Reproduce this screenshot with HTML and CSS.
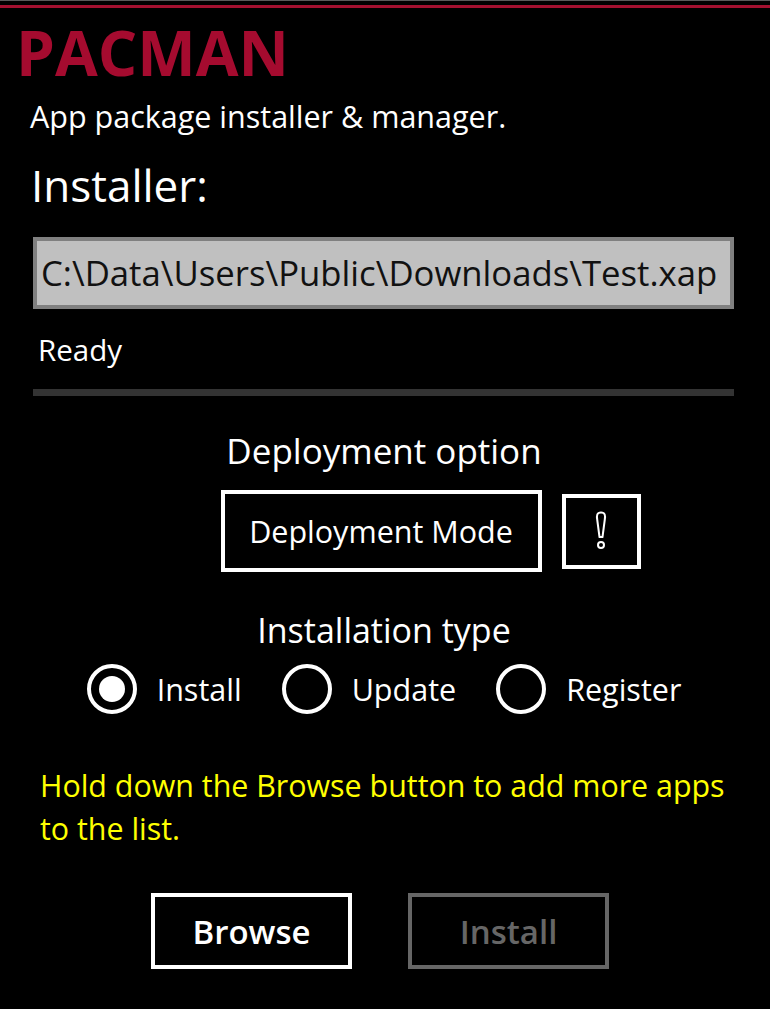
FILE: index.html
```html
<!DOCTYPE html>
<html>
<head>
<meta charset="utf-8">
<link rel="stylesheet" href="styles.css">
</head>
<body>
<div class="app">
  <div class="rule-gray"></div>
  <div class="rule-red"></div>
  <h1 class="title">PACMAN</h1>
  <p class="subtitle">App package installer &amp; manager.</p>
  <h2 class="section">Installer:</h2>
  <div class="pathbox">C:\Data\Users\Public\Downloads\Test.xap</div>
  <div class="status">Ready</div>
  <div class="progress"></div>

  <div class="group-label deploy-label">Deployment option</div>
  <div class="deploy-row">
    <div class="btn deploy-btn">Deployment Mode</div>
    <div class="btn info-btn">
      <svg width="16" height="40" viewBox="0 0 16 40">
        <path d="M8 1.5 C3.8 1.5 3.6 4.5 4.2 8.5 L6.5 26 H9.5 L11.8 8.5 C12.4 4.5 12.2 1.5 8 1.5 Z" fill="none" stroke="#fff" stroke-width="2" stroke-linejoin="round"/>
        <circle cx="8" cy="34" r="3" fill="none" stroke="#fff" stroke-width="2"/>
      </svg>
    </div>
  </div>

  <div class="group-label type-label">Installation type</div>
  <div class="radios">
    <label class="radio"><span class="circle"><span class="dot"></span></span>Install</label>
    <label class="radio"><span class="circle"></span>Update</label>
    <label class="radio"><span class="circle"></span>Register</label>
  </div>

  <p class="hint">Hold down the Browse button to add more apps to the list.</p>

  <div class="actions">
    <div class="btn action">Browse</div>
    <div class="btn action disabled">Install</div>
  </div>
</div>
</body>
</html>
```

FILE: styles.css
```css
html, body {
  margin: 0;
  padding: 0;
  background: #000;
}
body {
  width: 770px;
  height: 1009px;
  overflow: hidden;
  font-family: "Open Sans", "Noto Sans", sans-serif;
  color: #fff;
}
.app {
  display: flex;
  flex-direction: column;
}
.rule-gray {
  height: 1px;
  background: #5a5a5a;
}
.rule-red {
  height: 3px;
  margin-top: 4px;
  background: #a3102f;
}
.title {
  margin: 13px 0 0 16px;
  font-size: 62px;
  line-height: 62px;
  font-weight: 700;
  color: #a50b2f;
}
.subtitle {
  margin: 16px 0 0 30px;
  font-size: 30.5px;
  line-height: 34px;
}
.section {
  margin: 26px 0 0 31px;
  font-size: 44px;
  line-height: 52px;
  font-weight: 400;
}
.pathbox {
  margin: 26px 36px 0 33px;
  height: 64px;
  border: 4px solid #808080;
  background: #c0c0c0;
  color: #111;
  font-size: 34.7px;
  line-height: 64px;
  padding-left: 4px;
  white-space: nowrap;
  overflow: hidden;
}
.status {
  margin: 21px 0 0 38px;
  font-size: 29.5px;
  line-height: 40px;
}
.progress {
  margin: 19px 36px 0 33px;
  height: 7px;
  background: #333;
}
.group-label {
  text-align: center;
  font-size: 35px;
  line-height: 40px;
  padding-right: 2px;
}
.deploy-label {
  margin-top: 35px;
}
.type-label {
  margin-top: 38px;
  font-size: 34px;
}
.deploy-row {
  display: grid;
  grid-template-columns: 1fr auto 1fr;
  align-items: center;
  margin-top: 19px;
  padding-right: 8px;
}
.btn {
  box-sizing: border-box;
  border: 4px solid #fff;
  display: flex;
  align-items: center;
  justify-content: center;
}
.deploy-btn {
  grid-column: 2;
  width: 321px;
  height: 82px;
  font-size: 30.5px;
}
.info-btn {
  grid-column: 3;
  justify-self: start;
  margin-left: 20px;
  width: 79px;
  height: 75px;
}
.radios {
  display: flex;
  justify-content: center;
  gap: 40px;
  margin-top: 14px;
  padding-right: 2px;
}
.radio {
  display: flex;
  align-items: center;
  gap: 20px;
  font-size: 30.5px;
  line-height: 50px;
}
.circle {
  box-sizing: border-box;
  width: 50px;
  height: 50px;
  border: 4px solid #fff;
  border-radius: 50%;
  display: flex;
  align-items: center;
  justify-content: center;
}
.dot {
  width: 26px;
  height: 26px;
  border-radius: 50%;
  background: #fff;
}
.hint {
  margin: 50px 30px 0 40px;
  color: #ffff00;
  font-size: 30.4px;
  line-height: 43px;
}
.actions {
  display: flex;
  justify-content: center;
  gap: 56px;
  margin-top: 43px;
  padding-right: 10px;
}
.action {
  width: 201px;
  height: 76px;
  font-size: 33px;
  font-weight: 600;
}
.disabled {
  border-color: #666;
  color: #666;
}
```
